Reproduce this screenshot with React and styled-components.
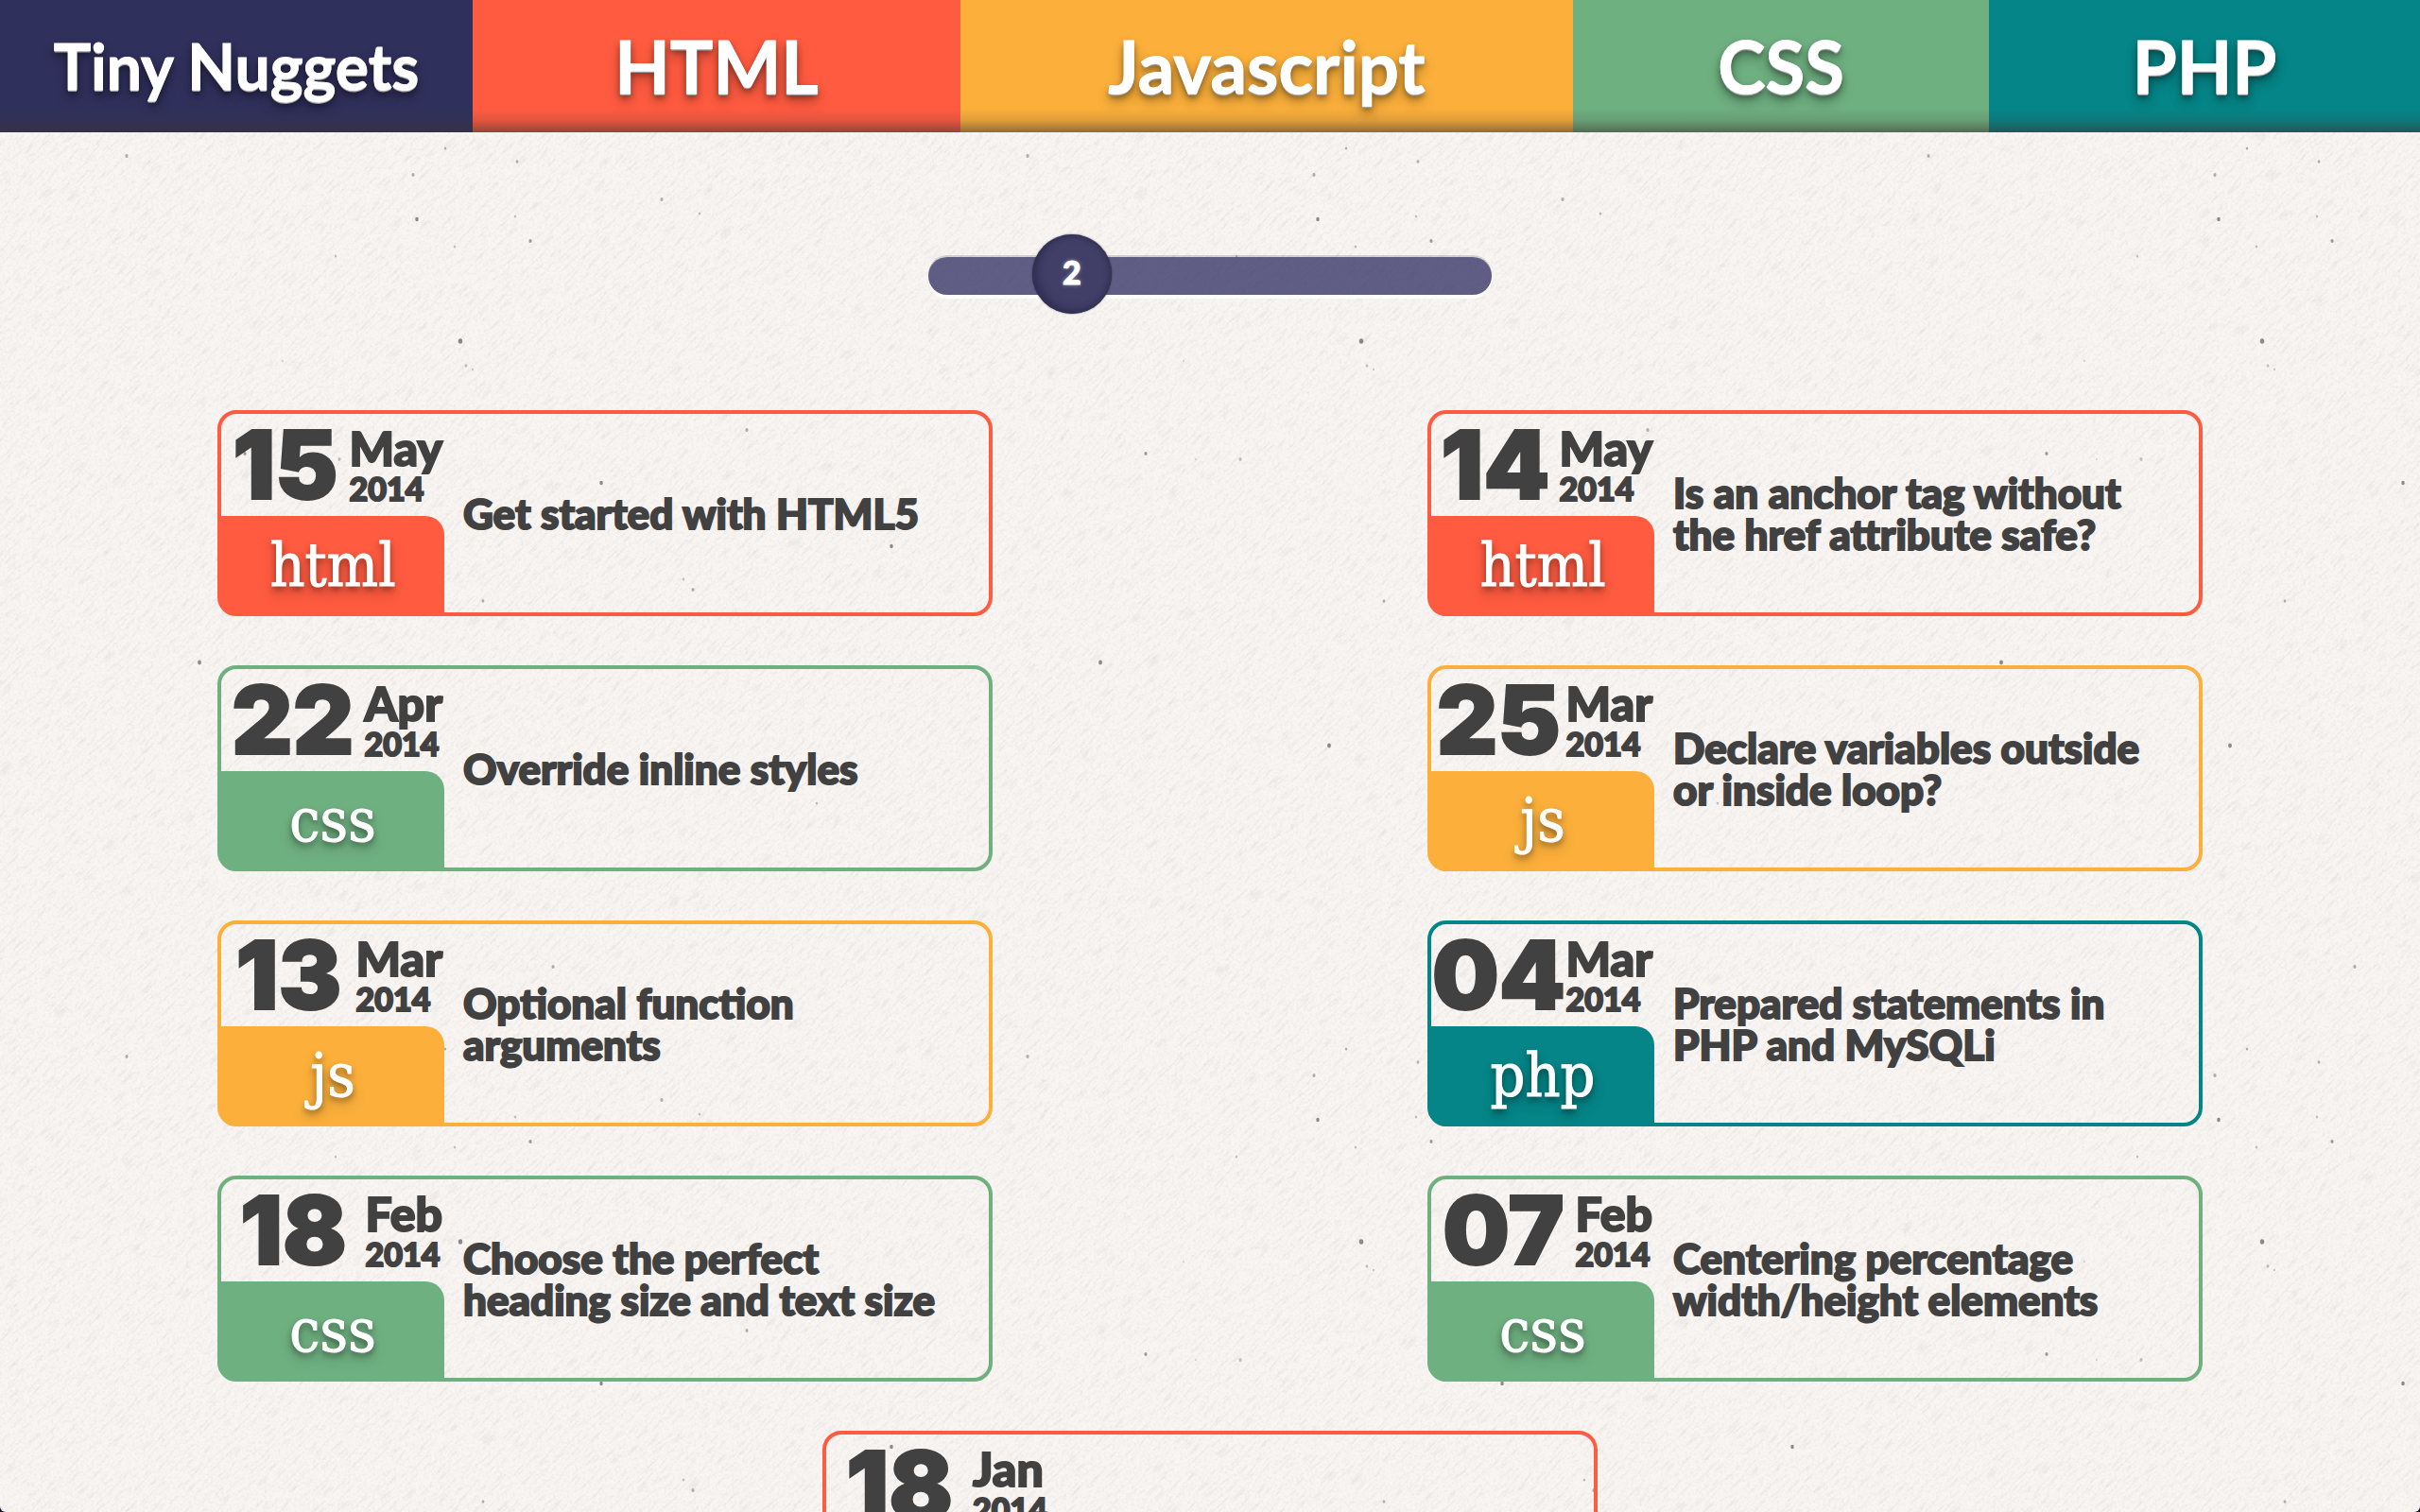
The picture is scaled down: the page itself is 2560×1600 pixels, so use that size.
import React, { useState } from "react";
import styled, { createGlobalStyle } from "styled-components";

const colors = {
  navy: "#30305c",
  html: "#ff5b40",
  js: "#fcb03b",
  css: "#6fb080",
  php: "#058587",
  ink: "#414141",
  paper: "#f8f5f2",
};

const display = `Lato, "Open Sans", sans-serif`;
const heavy = `Inter, "Open Sans", sans-serif`;

const GlobalStyle = createGlobalStyle`
  *, *::before, *::after { box-sizing: border-box; }
  html { background: #1a1433; }
  body { margin: 0; font-family: ${display}; color: ${colors.ink}; }
`;

const Page = styled.div`
  position: relative;
  height: 100vh;
  overflow: hidden auto;
  scrollbar-width: none;
  border-radius: 0 0 6px 6px;
  background: ${colors.paper};
`;

const PaperTexture = styled.svg`
  position: absolute;
  inset: 0;
  width: 100%;
  height: 100%;
  pointer-events: none;
`;

const Content = styled.div`
  position: relative;
`;

const Nav = styled.nav`
  display: grid;
  grid-template-columns: 500fr 516fr 648fr 440fr 456fr;
  height: 140px;
`;

const NavLink = styled.a`
  display: flex;
  align-items: center;
  justify-content: center;
  background: linear-gradient(transparent 82%, rgba(60, 50, 50, 0.15) 91%, rgba(60, 50, 50, 0.55)) ${(p) => p.$color};
  color: #fff;
  font-size: ${(p) => (p.$brand ? 66 : 76)}px;
  font-weight: 700;
  line-height: 80px;
  text-decoration: none;
  white-space: nowrap;
  text-shadow: 0 1px 0 #ccc, 0 2px 0 #999, 0 4px 6px rgba(0, 0, 0, 0.4),
    0 8px 14px rgba(0, 0, 0, 0.3);
  -webkit-text-stroke: 1px #fff;
`;

const Pager = styled.div`
  display: flex;
  justify-content: center;
  padding: 132px 0 122px;
`;

const Track = styled.div`
  position: relative;
  width: 596px;
  height: 40px;
  border-radius: 20px;
  background: rgba(48, 46, 98, 0.76);
  box-shadow: 0 -2px 0 rgba(0, 0, 0, 0.14), 0 4px 0 rgba(255, 255, 255, 0.8);
`;

const Range = styled.input`
  position: absolute;
  left: -42px;
  top: -24px;
  width: calc(100% + 84px);
  height: 84px;
  margin: 0;
  appearance: none;
  background: transparent;
  cursor: pointer;

  &::-webkit-slider-thumb {
    appearance: none;
    width: 84px;
    height: 84px;
    border: 0;
    border-radius: 50%;
    background: #413f68;
    box-shadow: inset 0 0 5px 3px rgba(45, 44, 75, 0.6),
      inset 6px -4px 8px rgba(35, 35, 65, 0.35), 0 0 2px rgba(0, 0, 0, 0.6);
  }
`;

const PageNumber = styled.output`
  position: absolute;
  top: -24px;
  width: 84px;
  margin-left: -42px;
  color: #fff;
  font-size: 34px;
  font-weight: 900;
  line-height: 80px;
  text-align: center;
  text-shadow: 0 0 4px rgba(255, 255, 255, 0.6);
  -webkit-text-stroke: 1px #fff;
  pointer-events: none;
`;

const Cards = styled.main`
  display: flex;
  flex-wrap: wrap;
  justify-content: space-around;
  row-gap: 52px;
  padding-bottom: 52px;
`;

const Card = styled.a`
  display: flex;
  width: 820px;
  height: 218px;
  margin: 0 100px;
  border: 4px solid ${(p) => p.$color};
  border-radius: 20px;
  color: inherit;
  text-decoration: none;
`;

const Meta = styled.div`
  display: flex;
  flex-direction: column;
  flex: 0 0 236px;
`;

const DateRow = styled.div`
  display: flex;
  height: 108px;
  padding-right: 2px;
  font-weight: 900;
  -webkit-text-stroke: 2px ${colors.ink};
`;

const Day = styled.span`
  flex: 1;
  font-family: ${heavy};
  font-size: 100px;
  line-height: 108px;
  text-align: center;
`;

const MonthYear = styled.span`
  display: flex;
  flex-direction: column;
  padding-top: 12px;
`;

const Month = styled.span`
  font-size: 50px;
  line-height: 48px;
`;

const Year = styled.span`
  font-size: 34px;
  line-height: 38px;
`;

const Tag = styled.span`
  flex: 1;
  border-top-right-radius: 20px;
  border-bottom-left-radius: 16px;
  background: ${(p) => p.$color};
  box-shadow: -1px 1px 0 ${(p) => p.$color};
  color: #fff;
  font-family: "DejaVu Serif Condensed", "DejaVu Serif", serif;
  font-size: 64px;
  line-height: 104px;
  text-align: center;
  text-shadow: 0 4px 6px rgba(0, 0, 0, 0.4), 0 8px 14px rgba(0, 0, 0, 0.25);
  -webkit-text-stroke: 1px #fff;
`;

const Title = styled.h2`
  flex: 1;
  align-self: center;
  margin: 0;
  padding: 0 20px;
  font-size: 44px;
  font-weight: 900;
  line-height: 44px;
  -webkit-text-stroke: 2px ${colors.ink};
`;

const links = [
  { label: "Tiny Nuggets", color: colors.navy, brand: true },
  { label: "HTML", color: colors.html },
  { label: "Javascript", color: colors.js },
  { label: "CSS", color: colors.css },
  { label: "PHP", color: colors.php },
];

const posts = [
  { day: "15", month: "May", tag: "html", title: "Get started with HTML5" },
  { day: "14", month: "May", tag: "html", title: "Is an anchor tag without the href attribute safe?" },
  { day: "22", month: "Apr", tag: "css", title: "Override inline styles" },
  { day: "25", month: "Mar", tag: "js", title: "Declare variables outside or inside loop?" },
  { day: "13", month: "Mar", tag: "js", title: "Optional function arguments" },
  { day: "04", month: "Mar", tag: "php", title: "Prepared statements in PHP and MySQLi" },
  { day: "18", month: "Feb", tag: "css", title: "Choose the perfect heading size and text size" },
  { day: "07", month: "Feb", tag: "css", title: "Centering percentage width/height elements" },
  { day: "18", month: "Jan", tag: "html", title: "" },
];

// x, y, radius and opacity of the flecks in one tile of the paper
const flecks = [
  [134, 165, 2, 0.4], [437, 185, 2, 0.4], [471, 157, 1.6, 0.4], [547, 171, 1.8, 0.4],
  [441, 232, 2.2, 0.6], [561, 255, 2, 0.5], [487, 361, 2.8, 0.6], [481, 261, 1.6, 0.3],
  [545, 229, 1.6, 0.3], [355, 271, 1.5, 0.3], [493, 387, 1.8, 0.3], [211, 701, 2.4, 0.6],
  [453, 789, 2.4, 0.6], [636, 511, 2.2, 0.6], [943, 578, 2.2, 0.6], [511, 636, 1.8, 0.4],
  [790, 455, 2, 0.4], [733, 624, 2, 0.4], [723, 613, 1.6, 0.3], [700, 211, 2, 0.4],
  [585, 70, 2, 0.4], [740, 226, 1.6, 0.3], [259, 480, 2, 0.5], [359, 486, 2, 0.3],
  [500, 391, 1.2, 0.3], [312, 486, 1.2, 0.2], [299, 382, 1.2, 0.2], [864, 850, 1.6, 0.3],
];

function Paper() {
  return (
    <PaperTexture aria-hidden="true">
      <defs>
        <filter id="grain" x="0" y="0" width="100%" height="100%">
          <feTurbulence type="fractalNoise" baseFrequency="0.35" numOctaves="2" seed="4" />
          <feColorMatrix values="0 0 0 0 0.45  0 0 0 0 0.42  0 0 0 0 0.4  0.3 0 0 0 -0.13" />
        </filter>
        <filter id="fibres" x="0" y="0" width="100%" height="100%">
          <feTurbulence type="fractalNoise" baseFrequency="0.05 0.4" numOctaves="2" seed="9" />
          <feColorMatrix values="0 0 0 0 0.4  0 0 0 0 0.38  0 0 0 0 0.38  0.5 0 0 0 -0.26" />
        </filter>
        <pattern id="flecks" width="953" height="953" patternUnits="userSpaceOnUse">
          {flecks.map(([x, y, r, o]) => (
            <ellipse key={`${x}-${y}`} cx={x} cy={y} rx={r * 0.8} ry={r} fill="#444" opacity={o} />
          ))}
        </pattern>
      </defs>
      <rect width="100%" height="100%" filter="url(#grain)" />
      <g transform="rotate(-45)">
        <rect x="-1300" y="-100" width="3300" height="3200" filter="url(#fibres)" />
      </g>
      <rect width="100%" height="100%" fill="url(#flecks)" />
    </PaperTexture>
  );
}

function PageSlider() {
  const first = 1;
  const last = 5;
  const [position, setPosition] = useState(2.02);
  const page = Math.round(position);
  const left = `${((position - first) / (last - first)) * 100}%`;
  return (
    <Pager>
      <Track>
        <Range
          id="page"
          type="range"
          aria-label="Page"
          min={first}
          max={last}
          step={0.01}
          value={position}
          onChange={(e) => setPosition(Number(e.target.value))}
        />
        <PageNumber htmlFor="page" style={{ left }}>{page}</PageNumber>
      </Track>
    </Pager>
  );
}

function Post({ day, month, tag, title }) {
  const color = colors[tag];
  return (
    <Card href="#" $color={color}>
      <Meta>
        <DateRow>
          <Day>{day}</Day>
          <MonthYear>
            <Month>{month}</Month>
            <Year>2014</Year>
          </MonthYear>
        </DateRow>
        <Tag $color={color}>{tag}</Tag>
      </Meta>
      {title && <Title>{title}</Title>}
    </Card>
  );
}

export default function App() {
  return (
    <>
      <GlobalStyle />
      <Page>
        <Paper />
        <Content>
          <Nav>
            {links.map((l) => (
              <NavLink key={l.label} href="#" $color={l.color} $brand={l.brand}>
                {l.label}
              </NavLink>
            ))}
          </Nav>
          <PageSlider />
          <Cards>
            {posts.map((p, i) => (
              <Post key={i} {...p} />
            ))}
          </Cards>
        </Content>
      </Page>
    </>
  );
}
